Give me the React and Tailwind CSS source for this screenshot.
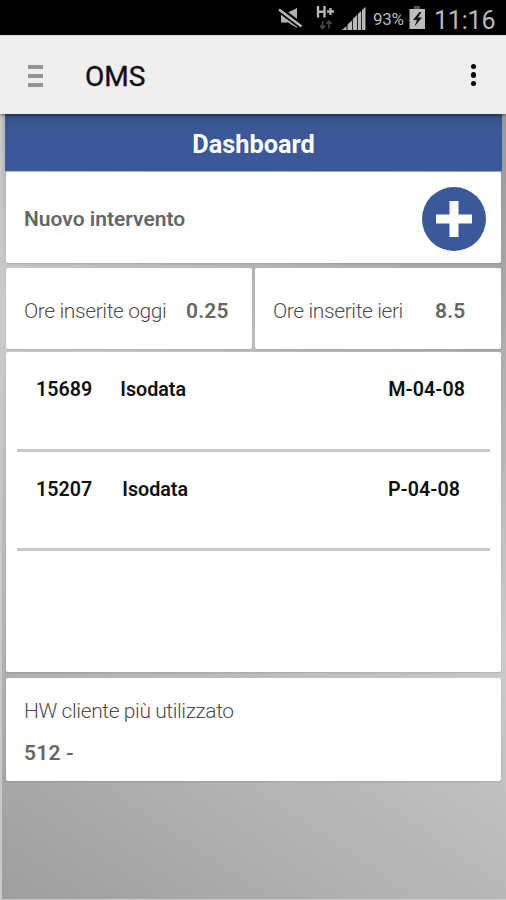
import React from 'react';

const jobs = [
  { id: '15689', customer: 'Isodata', code: 'M-04-08', nameClass: 'ml-[28px]', codeClass: 'mr-[25px]', rowClass: 'pt-[25px]' },
  { id: '15207', customer: 'Isodata', code: 'P-04-08', nameClass: 'ml-[30px]', codeClass: 'mr-[30px]', rowClass: 'pt-[25px]' },
];

function StatusBar() {
  return (
    <div className="flex h-[35px] shrink-0 items-center bg-black pl-[278px] text-[#b9b9b9]">
      <svg className="h-[35px] w-[94px] shrink-0" viewBox="278 0 94 35">
        <path d="M281 13.500h5l11-5.500v20l-9-5.500h-7z" fill="#b0b0b0" />
        <path d="M278 8.500l24 18" stroke="#000" strokeWidth="6.500" />
        <path d="M279 9.500l22.500 17" stroke="#b9b9b9" strokeWidth="2.400" />
        <path d="M318 6v11.500M324.500 6v11.500M318 11.700h6.500M327 11.500h7M330.500 8v7" stroke="#b4b4b4" strokeWidth="2.400" fill="none" />
        <path d="M322.500 21v7M320 25.500l2.500 3 2.500-3M329 28.500v-7M326.500 24l2.500-3 2.500 3" stroke="#484848" strokeWidth="1.600" fill="none" />
        <path d="M342 30l4.500-4v4zM347.500 24.500l4.500-4V30h-4.500zM352.800 19l4.200-4v15h-4.200zM357.800 14l3.400-3v19h-3.400zM362 10l3.500-3v23H362z" fill="#b8b8b8" />
      </svg>
      <span className="mt-[4px] w-[36px] shrink-0 pl-px text-[17px] tracking-[-0.3px]">93%</span>
      <svg className="h-[35px] w-[18px] shrink-0" viewBox="407 0 18 35">
        <path d="M413 6h6v3h-6z" fill="#555" />
        <path d="M408.500 9H424v20h-15.500z" fill="#bdbdbd" />
        <path d="M418.500 12l-6.500 8h4l-2.500 6.500 7.500-9h-4l3.500-5.500z" fill="#111" />
      </svg>
      <span className="mt-[5px] ml-[8px] shrink-0 text-[25px] leading-[35px] tracking-[-0.2px]">11:16</span>
    </div>
  );
}

function AppBar() {
  return (
    <header className="relative z-10 flex h-[79px] shrink-0 items-center border-t border-[#d8d8d8] bg-[#eeeeee] shadow-[0_1px_3px_rgba(0,0,0,0.5)]">
      <div className="ml-[28px] mt-[2px] flex w-[15px] flex-col gap-[5px]">
        <span className="h-[4px] bg-[#949494]" />
        <span className="h-[4px] bg-[#949494]" />
        <span className="h-[4px] bg-[#949494]" />
      </div>
      <h1 className="ml-[42px] mt-[3px] text-[28px] leading-none text-[#111] [-webkit-text-stroke:0.4px_#111]">OMS</h1>
      <div className="ml-auto mr-[30px] flex flex-col gap-[3px]">
        <span className="size-[5.500px] rounded-full bg-black" />
        <span className="size-[5.500px] rounded-full bg-black" />
        <span className="size-[5.500px] rounded-full bg-black" />
      </div>
    </header>
  );
}

function Card({ className, children }) {
  return (
    <section className={`rounded-[2px] bg-white shadow-[0_1px_2px_rgba(0,0,0,0.12)] ${className}`}>
      {children}
    </section>
  );
}

export default function App() {
  return (
    <div className="flex h-[900px] w-[506px] flex-col overflow-hidden bg-white font-['Roboto',sans-serif]">
      <StatusBar />
      <AppBar />
      <main className="flex flex-1 flex-col border-b border-l-2 border-[#c9c9c9] bg-[linear-gradient(34deg,#9e9e9e,#cbcbcb_52%,#989898)] pr-[5px] pl-[4px]">
        <div className="-ml-px -mr-px flex h-[57px] shrink-0 items-center justify-center bg-[linear-gradient(#334e83,#3b5998_16px)] pt-[5px]">
          <h2 className="text-[25.300px] font-bold leading-none text-white">Dashboard</h2>
        </div>

        <Card className="mt-px flex h-[91px] shrink-0 items-center pr-[15px] pl-[18px]">
          <span className="mt-[4px] text-[21px] font-semibold text-[#666]">Nuovo intervento</span>
          <button className="ml-auto mt-[2px] flex size-[64px] items-center justify-center rounded-full bg-[#3b5998]">
            <svg className="size-[36px]" viewBox="0 0 36 36">
              <path d="M13.500 0h9v13.500H36v9H22.500V36h-9V22.500H0v-9h13.500z" fill="#fff" />
            </svg>
          </button>
        </Card>

        <div className="mt-[5px] flex h-[81px] shrink-0 gap-[3px]">
          <Card className="flex w-[246px] items-center pl-[18px] pt-[6px] text-[#666]">
            <span className="w-[162px] text-[21px] font-light tracking-[-0.400px] text-[#4d4d4d]">Ore inserite oggi</span>
            <span className="text-[21px] font-semibold tracking-[0.200px]">0.25</span>
          </Card>
          <Card className="flex flex-1 items-center pl-[18px] pt-[6px] text-[#666]">
            <span className="w-[162px] text-[21px] font-light tracking-[-0.400px] text-[#4d4d4d]">Ore inserite ieri</span>
            <span className="text-[21px] font-semibold tracking-[0.200px]">8.5</span>
          </Card>
        </div>

        <Card className="mt-[3px] h-[320px] shrink-0 px-[11px]">
          {jobs.map((job) => (
            <div
              key={job.id}
              className={`flex h-[99.500px] items-start border-b-[3px] border-[#c8c8c8] pl-[19px] text-[19.700px] font-semibold leading-[26px] text-[#111] ${job.rowClass}`}
            >
              <span>{job.id}</span>
              <span className={job.nameClass}>{job.customer}</span>
              <span className={`ml-auto ${job.codeClass}`}>{job.code}</span>
            </div>
          ))}
        </Card>

        <Card className="mt-[6px] h-[103px] shrink-0 pl-[18px] pt-[21px] text-[#666]">
          <p className="text-[21px] font-light leading-[24px] tracking-[-0.400px] text-[#4d4d4d]">HW cliente più utilizzato</p>
          <p className="mt-[18px] text-[21px] font-semibold leading-[24px] tracking-[0.200px]">512 -</p>
        </Card>
      </main>
    </div>
  );
}
